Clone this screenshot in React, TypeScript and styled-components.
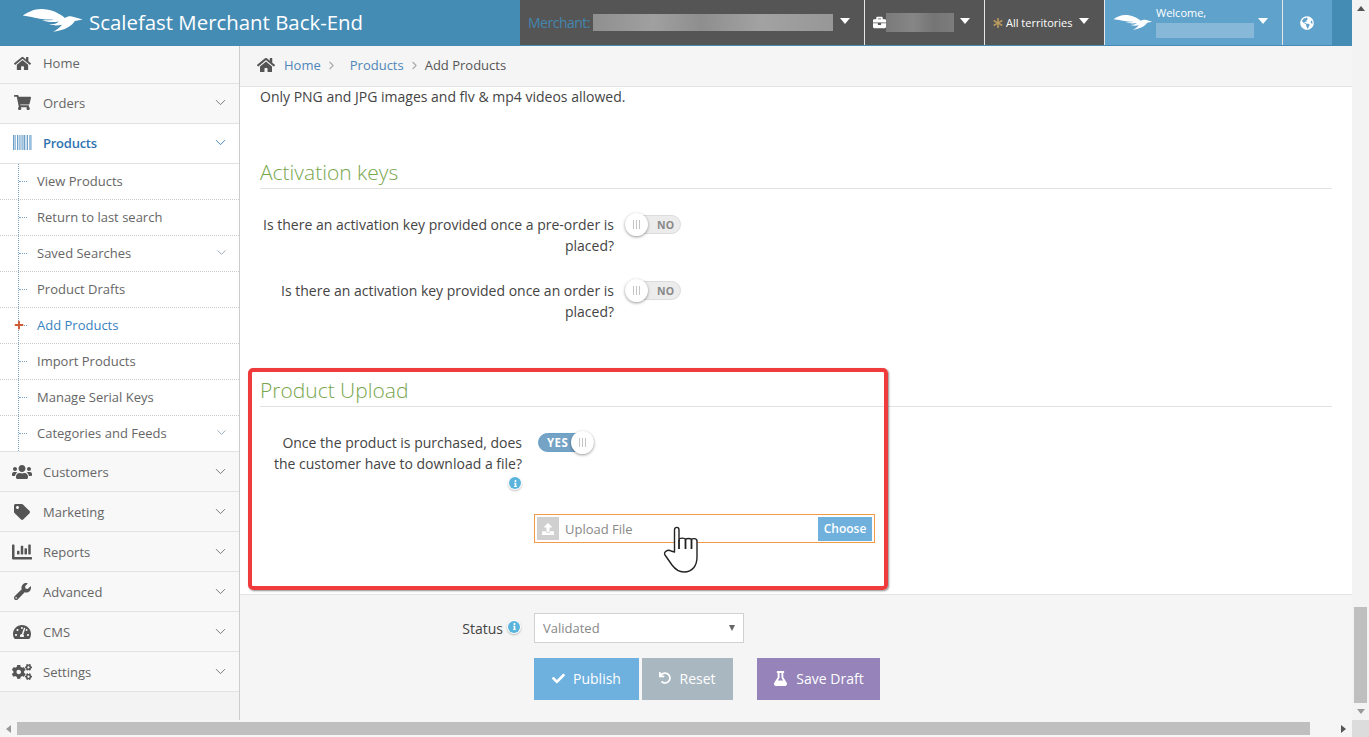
import React from 'react'
import styled, { createGlobalStyle } from 'styled-components'
import {
  FaHome,
  FaShoppingCart,
  FaUsers,
  FaTag,
  FaChartBar,
  FaWrench,
  FaTachometerAlt,
  FaCogs,
  FaCheck,
  FaUndo,
  FaFlask,
  FaBriefcase,
  FaGlobeAmericas,
  FaInfo,
  FaPlus,
  FaAsterisk,
  FaUpload,
} from 'react-icons/fa'
import { ChevronDown, ChevronRight } from 'lucide-react'

const GlobalStyle = createGlobalStyle`
  html, body {
    margin: 0;
    height: 100%;
    overflow: hidden;
    background: #fff;
  }
  * {
    box-sizing: border-box;
  }
  body {
    font-family: "Open Sans", "Liberation Sans", sans-serif;
    font-size: 14px;
    color: #444;
  }
`

const Page = styled.div`
  position: relative;
  width: 1369px;
  height: 737px;
  display: flex;
  flex-direction: column;
  overflow: hidden;
`
const Upper = styled.div`
  display: flex;
  height: 720px;
`
const Frame = styled.div`
  width: 1352px;
  display: flex;
  flex-direction: column;
`

/* header */
const Header = styled.header`
  height: 46px;
  background: #458cb5;
  display: flex;
  padding-right: 20px;
`
const Brand = styled.div`
  width: 520px;
  padding-left: 22px;
  display: flex;
  align-items: center;
  gap: 5px;
  color: #fff;
  font-size: 20.4px;
  padding-bottom: 3px;
`
const HeaderCell = styled.div<{ $w: number; $blue?: boolean; $pad?: number }>`
  width: ${({ $w }) => $w}px;
  height: 45px;
  flex: none;
  display: flex;
  align-items: center;
  padding-left: ${({ $pad }) => $pad ?? 8}px;
  background: ${({ $blue }) => ($blue ? '#5fa3cc' : '#555')};
  border-right: 1px solid #e6e6e6;
  color: #fff;
  font-size: 11px;
  &:last-child {
    border-right: none;
  }
`
const MerchantLabel = styled.span`
  color: #4486b0;
  font-size: 14px;
  width: 65px;
  flex: none;
  letter-spacing: -0.5px;
`
const Redacted = styled.span<{ $w: number; $h: number; $tone?: 'light' | 'dark' }>`
  width: ${({ $w }) => $w}px;
  height: ${({ $h }) => $h}px;
  flex: none;
  display: block;
  background: ${({ $tone }) => {
    if ($tone === 'light') return '#88b8d7'
    if ($tone === 'dark') return 'linear-gradient(90deg, #7a7a7a, #868686 40%, #757575 70%, #7c7c7c)'
    return 'linear-gradient(90deg, #8f8f8f, #a0a0a0 25%, #8e8e8e 45%, #a2a2a2 70%, #979797)'
  }};
`
const Caret = styled.span<{ $left: number }>`
  margin-left: ${({ $left }) => $left}px;
  margin-bottom: 3px;
  flex: none;
  width: 0;
  height: 0;
  border-left: 5px solid transparent;
  border-right: 5px solid transparent;
  border-top: 6px solid #fff;
`
const WelcomeBlock = styled.div`
  width: 98px;
  margin-left: -1px;
  flex: none;
  display: flex;
  flex-direction: column;
  span {
    line-height: 16px;
    margin: 0 0 2px 4px;
  }
`

/* sidebar */
const Body = styled.div`
  flex: 1;
  display: flex;
  min-height: 0;
`
const Sidebar = styled.aside`
  width: 240px;
  flex: none;
  background: #f3f3f3;
  border-right: 1px solid #ccc;
`
const NavRow = styled.div<{ $active?: boolean; $h?: number; $lift?: number }>`
  height: ${({ $h }) => $h ?? 40}px;
  display: flex;
  align-items: center;
  padding: 0 10px ${({ $lift }) => $lift ?? 0}px 10px;
  background: ${({ $active }) => ($active ? '#fff' : '#f8f8f8')};
  border-bottom: 1px solid #e2e2e2;
  color: ${({ $active }) => ($active ? '#2f74b1' : '#666')};
  font-size: 13px;
  font-weight: ${({ $active }) => ($active ? 600 : 400)};
  letter-spacing: ${({ $active }) => ($active ? '-0.25px' : '0')};
`
const NavIcon = styled.span`
  width: 24px;
  margin-right: 9px;
  flex: none;
  display: flex;
  align-items: center;
  justify-content: center;
  color: #555;
  svg {
    display: block;
  }
`
const NavText = styled.span`
  flex: 1;
`
const SubList = styled.div`
  background: #fff;
  border-bottom: 1px solid #e2e2e2;
  position: relative;
  &::before {
    content: '';
    position: absolute;
    left: 18px;
    top: 0;
    bottom: 0;
    border-left: 1px dotted #7da6c8;
  }
`
const SubRow = styled.div<{ $current?: boolean }>`
  position: relative;
  height: 36px;
  display: flex;
  align-items: center;
  padding: 0 10px 2px 37px;
  color: ${({ $current }) => ($current ? '#3a82c0' : '#666')};
  font-size: 13px;
  border-bottom: 1px dotted #ccc;
  &:last-child {
    border-bottom: none;
    height: 35px;
  }
  &::before {
    content: '';
    position: absolute;
    left: 19px;
    top: 17px;
    width: 8px;
    border-top: 1px dotted #7da6c8;
  }
`
const PlusMark = styled.span`
  position: absolute;
  left: 14px;
  top: 12px;
  color: #cf5b35;
  font-size: 10px;
  line-height: 0;
  z-index: 1;
  svg {
    display: block;
  }
`

/* main */
const Main = styled.main`
  flex: 1;
  display: flex;
  flex-direction: column;
  min-width: 0;
`
const Breadcrumb = styled.nav`
  height: 41px;
  flex: none;
  background: #f5f5f5;
  border-bottom: 1px solid #e4e4e4;
  display: flex;
  align-items: center;
  padding: 0 0 2px 17px;
  font-size: 13px;
  color: #555;
  svg.home {
    color: #555;
    margin-right: 9px;
  }
  svg.sep {
    color: #aaa;
    margin: 0 4px 0 4px;
  }
`
const Crumb = styled.a<{ $gap?: number }>`
  color: #4f86b8;
  margin-left: ${({ $gap }) => $gap ?? 0}px;
`
const Content = styled.div`
  flex: 1;
  background: #fff;
  padding: 0 20px;
`
const Note = styled.p`
  margin: 0;
  line-height: 20px;
  font-size: 14px;
  color: #444;
`
const SectionTitle = styled.h2<{ $top: number }>`
  margin: ${({ $top }) => $top}px 0 25px;
  height: 32px;
  font-size: 21px;
  line-height: 31px;
  font-weight: 300;
  color: #78a64d;
  border-bottom: 1px solid #e2e2e2;
`
const FormRow = styled.div<{ $label: number; $gap: number; $after?: number }>`
  display: grid;
  grid-template-columns: ${({ $label }) => $label}px 1fr;
  column-gap: ${({ $gap }) => $gap}px;
  margin-bottom: ${({ $after }) => $after ?? 24}px;
  align-items: start;
`
const Question = styled.label`
  text-align: right;
  line-height: 21px;
  font-size: 14px;
  color: #444;
  display: block;
`
const Track = styled.div<{ $on?: boolean }>`
  width: 56px;
  height: 19px;
  margin-top: 1px;
  border-radius: 10px;
  display: flex;
  align-items: center;
  flex-direction: ${({ $on }) => ($on ? 'row' : 'row-reverse')};
  justify-content: space-between;
  background: ${({ $on }) => ($on ? '#74a3c5' : '#ececec')};
  border: 1px solid ${({ $on }) => ($on ? '#6a9fc6' : '#dcdcdc')};
  color: ${({ $on }) => ($on ? '#fff' : '#888')};
  font-size: ${({ $on }) => ($on ? 11.5 : 10.5)}px;
  font-weight: 700;
  letter-spacing: ${({ $on }) => ($on ? 0.4 : 0)}px;
  padding: 0 0 0 ${({ $on }) => ($on ? 8 : 0)}px;
  span {
    margin-right: ${({ $on }) => ($on ? -4 : 6)}px;
  }
`
const Knob = styled.i<{ $on?: boolean }>`
  width: 23px;
  height: 23px;
  flex: none;
  border-radius: 50%;
  background: #fff;
  box-shadow: 0 1px 3px rgba(0, 0, 0, 0.4);
  margin: 0 ${({ $on }) => ($on ? '-1px' : '0')} 0 ${({ $on }) => ($on ? '0' : '-1px')};
  display: flex;
  align-items: center;
  justify-content: center;
  gap: 2px;
  position: relative;
  b {
    width: 1px;
    height: 9px;
    background: #c4c4c4;
  }
`
const InfoDot = styled.span<{ $mt?: number; $mb?: number }>`
  display: inline-flex;
  align-items: center;
  justify-content: center;
  width: 12px;
  height: 12px;
  margin: ${({ $mt }) => $mt ?? 0}px 1px ${({ $mb }) => $mb ?? 0}px 1px;
  border-radius: 50%;
  background: #5ab4dc;
  color: #fff;
  box-shadow: 0 0 0 1px #fff, 0 1px 2px 1px rgba(0, 0, 0, 0.25);
  font-size: 7px;
  vertical-align: top;
`
const UploadBox = styled.div`
  width: 341px;
  height: 29px;
  margin: 0 0 0 274px;
  padding: 2px;
  border: 1px solid #f2994a;
  display: flex;
  align-items: center;
  color: #888;
  font-size: 13px;
`
const UploadGlyph = styled.span`
  width: 22px;
  height: 23px;
  flex: none;
  margin-right: 6px;
  background: #d0d0d0;
  color: #fff;
  display: flex;
  align-items: center;
  justify-content: center;
  font-size: 12px;
`
const ChooseButton = styled.span`
  margin-left: auto;
  width: 54px;
  height: 24px;
  background: #6fb0dd;
  color: #fff;
  font-size: 12px;
  font-weight: 600;
  display: flex;
  align-items: center;
  justify-content: center;
`
const Footer = styled.footer`
  height: 126px;
  flex: none;
  background: #f5f5f5;
  border-top: 1px solid #e4e4e4;
  padding-top: 18px;
  display: grid;
  grid-template-columns: 294px 1fr;
  grid-auto-rows: min-content;
  row-gap: 15px;
`
const StatusLabel = styled.div`
  display: flex;
  justify-content: flex-end;
  align-items: center;
  gap: 4px;
  padding-right: 13px;
  font-size: 14px;
  color: #444;
`
const SelectBox = styled.div`
  width: 210px;
  height: 30px;
  background: #fff;
  border: 1px solid #d2d2d2;
  padding: 0 8px;
  display: flex;
  align-items: center;
  justify-content: space-between;
  color: #888;
  font-size: 13px;
  &::after {
    content: '';
    border-left: 3.5px solid transparent;
    border-right: 3.5px solid transparent;
    border-top: 6px solid #666;
  }
`
const ButtonRow = styled.div`
  grid-column: 2;
  display: flex;
`
const ActionButton = styled.button<{ $bg: string; $w: number; $after?: number }>`
  width: ${({ $w }) => $w}px;
  height: 42px;
  margin-right: ${({ $after }) => $after ?? 0}px;
  background: ${({ $bg }) => $bg};
  border: none;
  color: #fff;
  font-family: inherit;
  font-size: 14px;
  display: flex;
  align-items: center;
  justify-content: center;
  gap: 8px;
  padding: 0 0 2px;
`

/* scrollbars */
const VScroll = styled.div`
  width: 17px;
  flex: none;
  background: #f3f3f3;
  display: flex;
  flex-direction: column;
  align-items: center;
`
const ArrowCell = styled.div`
  width: 17px;
  height: 17px;
  flex: none;
  display: flex;
  align-items: center;
  justify-content: center;
`
const Arrow = styled.span<{ $dir: 'up' | 'down' | 'left' | 'right'; $c: string }>`
  width: 0;
  height: 0;
  border: 4px solid transparent;
  ${({ $dir, $c }) => {
    if ($dir === 'up') return `border-bottom: 5px solid ${$c}; border-top: none;`
    if ($dir === 'down') return `border-top: 5px solid ${$c}; border-bottom: none;`
    if ($dir === 'left') return `border-right: 5px solid ${$c}; border-left: none;`
    return `border-left: 5px solid ${$c}; border-right: none;`
  }}
`
const VThumb = styled.div`
  width: 13px;
  height: 96px;
  margin-top: auto;
  background: #bfbfbf;
`
const HScroll = styled.div`
  height: 17px;
  background: #f5f5f5;
  display: flex;
  align-items: center;
`
const HThumb = styled.div`
  width: 1293px;
  height: 13px;
  background: #bfbfbf;
`
const RightArrow = styled(ArrowCell)`
  margin-left: auto;
`
const Corner = styled.div`
  width: 17px;
  height: 17px;
  background: #dcdcdc;
`

/* overlays */
const Highlight = styled.div`
  position: absolute;
  left: 248px;
  top: 368px;
  width: 640px;
  height: 222px;
  border: 4px solid #ef3b3b;
  border-radius: 5px;
  box-shadow: 1px 1px 2px rgba(0, 0, 0, 0.45);
  pointer-events: none;
`
const HandCursor = styled.svg`
  position: absolute;
  left: 660px;
  top: 525px;
`

const Bird = ({ width }: { width: number }) => (
  <svg width={width} height={width * 0.4} viewBox="0 0 62 25" fill="#fff" style={{ flex: 'none' }}>
    <path d="M.5 6.5C6 3 12 0 19 0c10 0 18 4 24 9 3-2 6-2 9-1l9 2.5-8 1.5c-3 5-9 9-22 11 4-2 7-4 9-7-4 1-9 1-13-.5 5 0 8-1 10-3-6 1-12 1-17-1.5 4 .5 9 .5 12-.5-6 .5-12 0-22.5-2.5z" />
  </svg>
)

const Barcode = () => (
  <svg width="19" height="15" viewBox="0 0 19 15" fill="#6d9fc9">
    {[0, 2, 4, 5.5, 7.5, 9, 10.5, 12.5, 14, 16, 17.5].map((x, i) => (
      <rect key={x} x={x} y="0" width={i % 3 === 0 ? 1.5 : 1} height="15" opacity={i % 2 ? 0.65 : 1} />
    ))}
  </svg>
)

const Chevron = ({ active }: { active?: boolean }) => (
  <ChevronDown size={17} strokeWidth={1.2} color={active ? '#2f74b1' : '#666'} />
)

const Toggle = ({ on }: { on?: boolean }) => (
  <Track $on={on}>
    <span>{on ? 'YES' : 'NO'}</span>
    <Knob $on={on}>
      <b />
      <b />
      <b />
    </Knob>
  </Track>
)

const subItems = [
  { label: 'View Products' },
  { label: 'Return to last search' },
  { label: 'Saved Searches', more: true },
  { label: 'Product Drafts' },
  { label: 'Add Products', current: true },
  { label: 'Import Products' },
  { label: 'Manage Serial Keys' },
  { label: 'Categories and Feeds', more: true },
]

const lowerNav = [
  { label: 'Customers', icon: <FaUsers size={20} /> },
  { label: 'Marketing', icon: <FaTag size={16} /> },
  { label: 'Reports', icon: <FaChartBar size={20} /> },
  { label: 'Advanced', icon: <FaWrench size={17} /> },
  { label: 'CMS', icon: <FaTachometerAlt size={18} /> },
  { label: 'Settings', icon: <FaCogs size={20} /> },
]

const App: React.FC = () => {
  return (
    <Page>
      <GlobalStyle />
      <Upper>
        <Frame>
          <Header>
            <Brand>
              <Bird width={62} />
              Scalefast Merchant Back-End
            </Brand>
            <HeaderCell $w={345}>
              <MerchantLabel>Merchant:</MerchantLabel>
              <Redacted $w={240} $h={17} />
              <Caret $left={7} />
            </HeaderCell>
            <HeaderCell $w={120}>
              <FaBriefcase size={13} />
              <Redacted $w={68} $h={19} $tone="dark" />
              <Caret $left={6} />
            </HeaderCell>
            <HeaderCell $w={120}>
              <FaAsterisk size={10} color="#b99a5f" />
              <span style={{ marginLeft: 3 }}>All territories</span>
              <Caret $left={7} />
            </HeaderCell>
            <HeaderCell $w={178} $blue>
              <Bird width={40} />
              <WelcomeBlock>
                <span>Welcome,</span>
                <Redacted $w={98} $h={15} $tone="light" />
              </WelcomeBlock>
              <Caret $left={8} />
            </HeaderCell>
            <HeaderCell $w={49} $blue $pad={17}>
              <FaGlobeAmericas size={14} />
            </HeaderCell>
          </Header>
          <Body>
            <Sidebar>
              <NavRow $h={38} $lift={3}>
                <NavIcon>
                  <FaHome size={17} />
                </NavIcon>
                <NavText>Home</NavText>
              </NavRow>
              <NavRow $lift={2}>
                <NavIcon>
                  <FaShoppingCart size={17} />
                </NavIcon>
                <NavText>Orders</NavText>
                <Chevron />
              </NavRow>
              <NavRow $active $lift={2}>
                <NavIcon>
                  <Barcode />
                </NavIcon>
                <NavText>Products</NavText>
                <Chevron active />
              </NavRow>
              <SubList>
                {subItems.map((item) => (
                  <SubRow key={item.label} $current={item.current}>
                    {item.current && (
                      <PlusMark>
                        <FaPlus />
                      </PlusMark>
                    )}
                    <NavText>{item.label}</NavText>
                    {item.more && <ChevronDown size={15} strokeWidth={1.2} color="#7a93a8" />}
                  </SubRow>
                ))}
              </SubList>
              {lowerNav.map((item) => (
                <NavRow key={item.label}>
                  <NavIcon>{item.icon}</NavIcon>
                  <NavText>{item.label}</NavText>
                  <Chevron />
                </NavRow>
              ))}
            </Sidebar>
            <Main>
              <Breadcrumb>
                <FaHome className="home" size={18} />
                <Crumb>Home</Crumb>
                <ChevronRight className="sep" size={13} />
                <Crumb $gap={8}>Products</Crumb>
                <ChevronRight className="sep" size={13} />
                Add Products
              </Breadcrumb>
              <Content>
                <Note>Only PNG and JPG images and flv &amp; mp4 videos allowed.</Note>
                <SectionTitle $top={50}>Activation keys</SectionTitle>
                <FormRow $label={354} $gap={11}>
                  <Question>Is there an activation key provided once a pre-order is placed?</Question>
                  <Toggle />
                </FormRow>
                <FormRow $label={354} $gap={11}>
                  <Question>Is there an activation key provided once an order is placed?</Question>
                  <Toggle />
                </FormRow>
                <SectionTitle $top={53}>Product Upload</SectionTitle>
                <FormRow $label={262} $gap={16} $after={19}>
                  <Question>
                    Once the product is purchased, does the customer have to download a file?
                    <br />
                    <InfoDot $mt={3}>
                      <FaInfo />
                    </InfoDot>
                  </Question>
                  <Toggle on />
                </FormRow>
                <UploadBox>
                  <UploadGlyph>
                    <FaUpload />
                  </UploadGlyph>
                  Upload File
                  <ChooseButton>Choose</ChooseButton>
                </UploadBox>
              </Content>
              <Footer>
                <StatusLabel>
                  Status
                  <InfoDot $mb={3}>
                    <FaInfo />
                  </InfoDot>
                </StatusLabel>
                <SelectBox>Validated</SelectBox>
                <ButtonRow>
                  <ActionButton $bg="#6eb0de" $w={105} $after={3}>
                    <FaCheck size={13} />
                    Publish
                  </ActionButton>
                  <ActionButton $bg="#a9b7c0" $w={91} $after={24}>
                    <FaUndo size={12} />
                    Reset
                  </ActionButton>
                  <ActionButton $bg="#9583b9" $w={123}>
                    <FaFlask size={15} />
                    Save Draft
                  </ActionButton>
                </ButtonRow>
              </Footer>
            </Main>
          </Body>
        </Frame>
        <VScroll>
          <ArrowCell>
            <Arrow $dir="up" $c="#555" />
          </ArrowCell>
          <VThumb />
          <ArrowCell>
            <Arrow $dir="down" $c="#999" />
          </ArrowCell>
        </VScroll>
      </Upper>
      <HScroll>
        <ArrowCell>
          <Arrow $dir="left" $c="#999" />
        </ArrowCell>
        <HThumb />
        <RightArrow>
          <Arrow $dir="right" $c="#555" />
        </RightArrow>
        <Corner />
      </HScroll>
      <Highlight />
      <HandCursor width="40" height="50" viewBox="0 0 40 50">
        <path
          d="M14.5 27V5c0-3.5 4.5-3.5 4.5 0v10c0-2.5 6.5-2.5 6.5 0 0-2 6-2 6 0 0-2 5.5-2 5.5 1v16c0 8-4 15-13 15-6 0-9-3-12-7L5 30c-2-3 3-6 6-4z"
          fill="#fff"
          stroke="#222"
          strokeWidth="1.4"
          strokeLinejoin="round"
        />
        <path d="M19 15v9M25.5 15v9M31.5 15v9" stroke="#222" strokeWidth="1.8" fill="none" />
      </HandCursor>
    </Page>
  )
}

export default App
